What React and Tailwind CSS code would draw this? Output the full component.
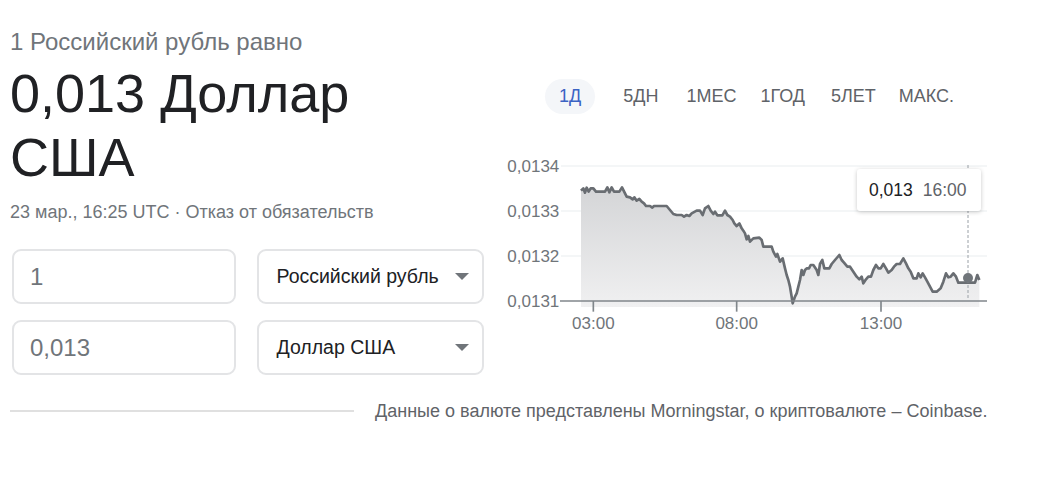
import React from 'react';

const POINTS = [
  [273,152],[280,145],[285,158],[290,143],[296,155],[302,145],[310,145],[318,155],[345,155],[352,142],[358,157],[365,142],[372,155],[388,155],[396,142],[405,160],[410,170],[420,172],[428,178],[433,172],[440,182],[448,177],[455,185],[462,190],[468,198],[480,198],[487,203],[492,198],[530,198],[540,210],[550,222],[560,225],[575,225],[582,230],[590,225],[598,228],[605,220],[620,212],[630,212],[638,225],[645,205],[655,198],[662,212],[670,222],[675,215],[682,226],[697,226],[705,212],[712,225],[720,230],[728,240],[733,250],[740,258],[748,250],[755,265],[760,272],[765,280],[770,298],[775,288],[780,305],[790,295],[808,293],[815,300],[820,320],[845,320],[850,335],[858,350],[862,342],[870,365],[878,355],[885,385],[890,405],[895,420],[900,440],[905,470],[908,490],[915,470],[920,460],[925,440],[930,420],[935,390],[940,405],[945,390],[950,385],[957,385],[962,375],[970,375],[980,390],[985,405],[990,372],[997,360],[1003,385],[1018,385],[1025,372],[1035,360],[1048,345],[1055,360],[1062,368],[1072,380],[1080,380],[1090,395],[1100,410],[1108,418],[1115,410],[1120,430],[1128,418],[1135,410],[1143,410],[1150,390],[1158,375],[1165,385],[1172,385],[1180,372],[1188,385],[1195,398],[1205,390],[1212,380],[1220,372],[1230,372],[1240,355],[1248,370],[1255,385],[1262,395],[1270,415],[1280,415],[1285,400],[1292,412],[1298,400],[1305,412],[1312,425],[1320,440],[1328,455],[1340,455],[1352,445],[1360,425],[1368,400],[1375,412],[1382,410],[1390,400],[1398,410],[1405,428],[1455,428],[1462,405],[1468,420],
];

const line = POINTS.map(([x, y]) => `${x},${y}`).join(' ');
const area = `273,501 ${line} 1468,501`;

const yTicks = [
  { y: 78, label: '0,0134' },
  { y: 213, label: '0,0133' },
  { y: 348, label: '0,0132' },
  { y: 483, label: '0,0131' },
];
const xTicks = [
  { x: 310, label: '03:00' },
  { x: 740, label: '08:00' },
  { x: 1173, label: '13:00' },
];

const FONT = "'Liberation Sans', Arial, sans-serif";

function Chart() {
  return (
    <div className="relative w-[520px] h-[200px]">
      <svg width="520" height="200" viewBox="0 0 1560 600" className="block">
        <defs>
          <linearGradient id="fill" x1="0" y1="0" x2="0" y2="1">
            <stop offset="0%" stopColor="#d4d5d7" />
            <stop offset="100%" stopColor="#f0f0f1" />
          </linearGradient>
        </defs>
        {yTicks.slice(0, 3).map((t) => (
          <line key={t.y} x1="213" x2="1491" y1={t.y} y2={t.y} stroke="#f1f3f4" strokeWidth="4" />
        ))}
        <polygon points={area} fill="url(#fill)" />
        <polyline points={line} fill="none" stroke="#696d72" strokeWidth="8" strokeLinejoin="round" />
        <line x1="210" x2="1491" y1="483" y2="483" stroke="#80868b" strokeWidth="5" />
        {xTicks.map((t) => (
          <g key={t.x}>
            <line x1={t.x} x2={t.x} y1="483" y2="515" stroke="#80868b" strokeWidth="5" />
            <text x={t.x} y="566" textAnchor="middle" fontSize="51" fill="#70757a" fontFamily={FONT}>
              {t.label}
            </text>
          </g>
        ))}
        {yTicks.map((t) => (
          <text key={t.label} x="208" y={t.y + 18} textAnchor="end" fontSize="51" fill="#70757a" fontFamily={FONT}>
            {t.label}
          </text>
        ))}
        <line x1="1434" x2="1434" y1="75" y2="483" stroke="#9aa0a6" strokeWidth="3" strokeDasharray="9 6" />
        <circle cx="1434" cy="414" r="15" fill="#70757a" />
      </svg>
      <div className="absolute left-[367px] top-[29px] w-[124px] h-[42px] bg-white rounded-[3px] shadow-[0_1px_4px_rgba(0,0,0,0.22)] flex items-center pl-[12px] gap-[10px] text-[17.5px]">
        <span className="text-[#202124]">0,013</span>
        <span className="text-[#5f6368]">16:00</span>
      </div>
    </div>
  );
}

function Arrow() {
  return (
    <svg width="14" height="7" viewBox="0 0 14 7" className="block">
      <path d="M0 0 L14 0 L7 7 Z" fill="#70757a" />
    </svg>
  );
}

export default function App() {
  return (
    <div className="w-[1050px] h-[496px] bg-white font-['Liberation_Sans',Arial,sans-serif] overflow-hidden">
      <div className="flex pl-[10px]">
        <div className="w-[474px] flex-shrink-0 pt-[28px]">
          <div className="text-[24px] leading-[28px] text-[#70757a]">1 Российский рубль равно</div>
          <div className="mt-[5px] text-[54px] leading-[64px] text-[#202124]">
            0,013 Доллар
            <br />
            США
          </div>
          <div className="mt-[12px] text-[18px] leading-[22px] text-[#70757a]">
            23 мар., 16:25 UTC · <span>Отказ от обязательств</span>
          </div>
          <div className="mt-[26px] ml-[2px] flex flex-col gap-[16px]">
            {[
              ['1', 'Российский рубль'],
              ['0,013', 'Доллар США'],
            ].map(([val, cur]) => (
              <div key={cur} className="flex gap-[21px]">
                <div className="w-[225px] h-[55px] border-2 border-[#e3e4e6] rounded-[9px] flex items-center pl-[16px] text-[24px] text-[#70757a]">
                  {val}
                </div>
                <div className="w-[227px] h-[55px] border-2 border-[#e3e4e6] rounded-[9px] flex items-center justify-between pl-[17px] pr-[13px] text-[19.5px] text-[#202124]">
                  <span>{cur}</span>
                  <Arrow />
                </div>
              </div>
            ))}
          </div>
        </div>
        <div className="ml-[6px] flex flex-col">
          <div className="mt-[79px] flex items-center h-[35px] text-[18px] text-[#5f6368]">
            <div className="ml-[55px] h-[35px] px-[14px] rounded-full bg-[#f4f6f9] flex items-center text-[#3b63c4]">1Д</div>
            <span className="ml-[28px]">5ДН</span>
            <span className="ml-[28px]">1МЕС</span>
            <span className="ml-[24px]">1ГОД</span>
            <span className="ml-[26px]">5ЛЕТ</span>
            <span className="ml-[23px]">МАКС.</span>
          </div>
          <div className="mt-[26px]">
            <Chart />
          </div>
        </div>
      </div>
      <div className="flex items-center pl-[10px] mt-[25px]">
        <div className="w-[344px] h-[2px] bg-[#e0e0e0]" />
        <div className="ml-[21px] text-[18px] leading-[22px] text-[#5f6368]">
          Данные о валюте представлены Morningstar, о криптовалюте – Coinbase.
        </div>
      </div>
    </div>
  );
}
